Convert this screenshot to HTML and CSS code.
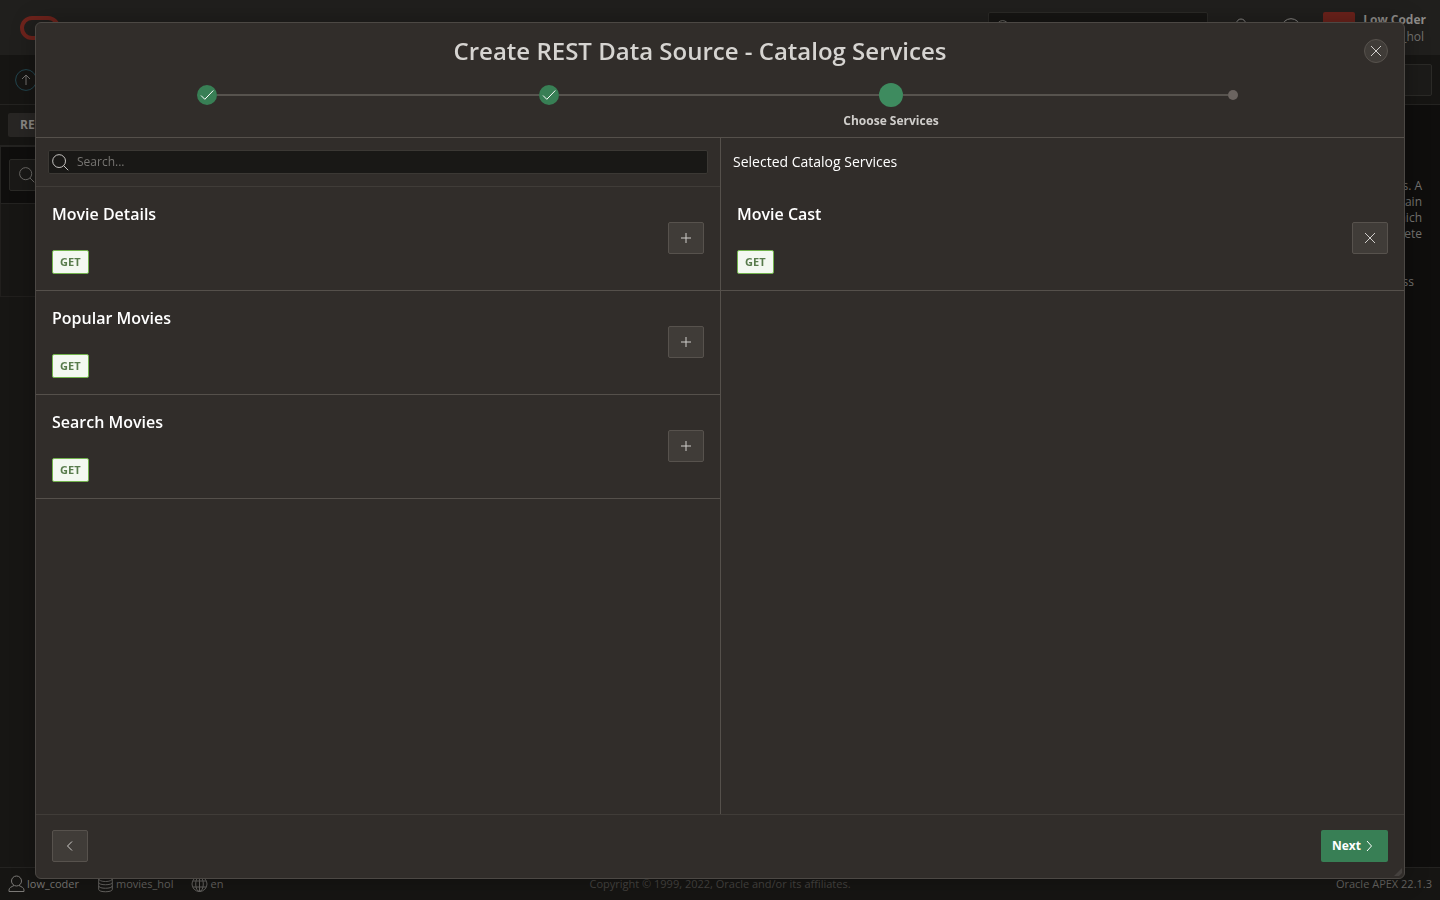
FILE: index.html
```html
<!DOCTYPE html>
<html lang="en">
<head>
<meta charset="utf-8">
<title>Create REST Data Source - Catalog Services</title>
<link rel="stylesheet" href="styles.css">
</head>
<body>
<svg class="sprite" aria-hidden="true">
  <symbol id="search" viewBox="0 0 18 18"><circle cx="7.5" cy="7.5" r="6.8"/><path d="M12.4 12.4l4.8 4.8"/></symbol>
  <symbol id="plus" viewBox="0 0 16 16"><path d="M8 3v10M3 8h10"/></symbol>
  <symbol id="close" viewBox="0 0 16 16"><path d="M3 3l10 10M13 3L3 13"/></symbol>
  <symbol id="check" viewBox="0 0 20 20"><path d="M4 10.5l3.8 3.8L16.3 5.5"/></symbol>
</svg>

<div class="page">
  <header class="topbar">
    <svg class="logo" viewBox="0 0 40 24"><rect x="2" y="2" width="36" height="20" rx="10"/></svg>
    <div class="top-search"><svg class="icon"><use href="#search"/></svg></div>
    <svg class="top-icon" viewBox="0 0 20 20"><circle cx="10" cy="5.5" r="4.5"/><path d="M2 19c0-5 3-8 8-8s8 3 8 8"/></svg>
    <svg class="top-icon" viewBox="0 0 20 20"><circle cx="10" cy="10" r="9.3"/></svg>
    <div class="avatar"></div>
    <div class="account"><strong>Low Coder</strong><span>movies_hol</span></div>
  </header>
  <div class="toolbar">
    <svg class="up" viewBox="0 0 22 22"><circle cx="11" cy="11" r="10.4"/><path d="M11 16V6.5M7 10l4-4 4 4"/></svg>
    <div class="toolbar-button"></div>
  </div>
  <div class="tabs"><span class="tab">REST</span></div>
  <main class="content">
    <section class="report">
      <div class="report-bar"><div class="report-search"><svg class="icon"><use href="#search"/></svg></div></div>
    </section>
    <aside class="about">
      <p>sources. A<br>contain<br>which<br>discrete</p>
      <p class="about-more">access</p>
    </aside>
  </main>
  <footer class="statusbar">
    <ul class="status">
      <li class="user"><svg viewBox="0 0 17 18"><circle cx="8.500" cy="6" r="5"/><path d="M6 10.500C3.500 12 1 12.500 1 15v1.500h15V15c0-2.500-2.500-3-5-4.500"/></svg>low_coder</li>
      <li class="schema"><svg viewBox="0 0 17 18"><ellipse cx="8.500" cy="4" rx="6.800" ry="2.500"/><path d="M1.700 4v10.500c0 3 13.600 3 13.600 0V4M1.700 7.500c0 3 13.600 3 13.600 0M1.700 11c0 3 13.600 3 13.600 0"/></svg>movies_hol</li>
      <li class="language"><svg viewBox="0 0 17 18"><circle cx="8.500" cy="9" r="7.500"/><ellipse cx="8.500" cy="9" rx="3.800" ry="7.500"/><path d="M8.500 1.500v15M2 6h13M2 12h13"/></svg>en</li>
    </ul>
    <span class="copyright">Copyright © 1999, 2022, Oracle and/or its affiliates.</span>
    <span class="version">Oracle APEX 22.1.3</span>
  </footer>
</div>

<div class="dialog" role="dialog" aria-modal="true" aria-labelledby="dialog-title">
  <header class="dialog-header">
    <div class="title-row">
      <h1 id="dialog-title">Create REST Data Source - Catalog Services</h1>
      <button class="close" type="button" aria-label="Close"><svg class="icon"><use href="#close"/></svg></button>
    </div>
    <ol class="steps">
      <li class="step"><div class="track"><span class="dot done"><svg viewBox="0 0 20 20"><use href="#check"/></svg></span></div></li>
      <li class="step"><div class="track"><span class="dot done"><svg viewBox="0 0 20 20"><use href="#check"/></svg></span></div></li>
      <li class="step" aria-current="step"><div class="track"><span class="dot current"></span></div><span class="step-label">Choose Services</span></li>
      <li class="step"><div class="track"><span class="dot"></span></div></li>
    </ol>
  </header>
  <div class="panels">
    <section class="panel">
      <div class="search-region">
        <label class="search"><svg class="icon"><use href="#search"/></svg><input type="search" placeholder="Search..." aria-label="Search services"></label>
      </div>
      <ul class="services">
        <li class="service"><div class="service-text"><h3>Movie Details</h3><span class="badge">GET</span></div><button class="square" type="button" aria-label="Add Movie Details"><svg class="icon"><use href="#plus"/></svg></button></li>
        <li class="service"><div class="service-text"><h3>Popular Movies</h3><span class="badge">GET</span></div><button class="square" type="button" aria-label="Add Popular Movies"><svg class="icon"><use href="#plus"/></svg></button></li>
        <li class="service"><div class="service-text"><h3>Search Movies</h3><span class="badge">GET</span></div><button class="square" type="button" aria-label="Add Search Movies"><svg class="icon"><use href="#plus"/></svg></button></li>
      </ul>
    </section>
    <section class="panel selected">
      <h2>Selected Catalog Services</h2>
      <ul class="services">
        <li class="service"><div class="service-text"><h3>Movie Cast</h3><span class="badge">GET</span></div><button class="square" type="button" aria-label="Remove Movie Cast"><svg class="icon"><use href="#close"/></svg></button></li>
      </ul>
    </section>
  </div>
  <footer class="dialog-footer">
    <button class="square" type="button" aria-label="Previous"><svg class="icon" viewBox="0 0 16 16"><path d="M10 3.500L5.500 8l4.500 4.500"/></svg></button>
    <button class="next" type="button">Next<svg viewBox="0 0 16 16"><path d="M6 3l4.500 5L6 13"/></svg></button>
  </footer>
  <svg class="grip" viewBox="0 0 8 8"><path d="M0 8L8 0V5L5 8z"/></svg>
</div>
</body>
</html>
```
FILE: styles.css
```css
* { box-sizing: border-box; }

body {
  margin: 0;
  background: #0f0e0d;
  color: #757370;
  font: 12px/16px "Open Sans", "Noto Sans", sans-serif;
}

h1, h2, h3, p, ul, ol { margin: 0; padding: 0; }
ul, ol { list-style: none; }
button { padding: 0; font: inherit; color: inherit; cursor: pointer; }
svg { display: block; fill: none; stroke: currentColor; }
.icon { width: 16px; height: 16px; }
.sprite { display: none; }

/* Page under the dialog */
.page { display: flex; flex-direction: column; height: 100vh; overflow: hidden; }

.topbar {
  display: flex;
  flex: none;
  height: 55px;
  padding: 12px 14px 0 20px;
  background: #201f1d;
}
.logo { width: 40px; height: 24px; margin: 4px auto 0 0; color: #6e231c; stroke-width: 4; }
.top-search {
  width: 220px;
  height: 32px;
  margin-right: 23px;
  padding: 7px;
  background: #161513;
  border: 1px solid #2b2a27;
  border-radius: 2px;
}
.top-icon { width: 20px; height: 20px; margin: 6px 30px 0 0; color: #8a8885; }
.top-icon + .top-icon { margin-right: 22px; }
.avatar { width: 32px; height: 32px; margin-right: 6px; background: #6b221b; border-radius: 2px; }
.account { display: flex; flex-direction: column; align-items: flex-end; }
.account strong { color: #8e8c89; font-weight: 700; }
.account span { padding: 1px 2px 0 0; }

.toolbar {
  display: flex;
  flex: none;
  align-items: center;
  justify-content: space-between;
  height: 50px;
  padding: 0 8px 0 15px;
  background: #161513;
  border-bottom: 1px solid #242321;
}
.up { width: 22px; height: 22px; color: #757370; }
.up circle { stroke: #234650; }
.toolbar-button { width: 90px; height: 32px; background: #1c1b19; border: 1px solid #2b2a27; border-radius: 2px; }

.tabs { flex: none; height: 40px; padding: 8px; background: #161513; width: 50%; }
.tab {
  display: inline-block;
  padding: 4px 12px;
  background: #282624;
  border-radius: 2px;
  color: #8a8885;
  font-weight: 700;
}
.content { display: flex; flex: 1; justify-content: space-between; min-height: 0; }
.report { width: 50%; background: #171614; border-top: 1px solid #242321; }
.report-bar { padding: 12px 8px; background: #0f0e0d; border: 1px solid #242321; }
.report-search { width: 50%; height: 32px; padding: 7px 9px; background: #1a1917; border: 1px solid #2b2a27; border-radius: 2px; }
.report::after { content: ""; display: block; height: 92px; border: 1px solid #211f1d; border-top: 0; }
.about { padding: 33px 18px 0 0; text-align: right; }
.about-more { padding: 32px 8px 0 0; }

.statusbar {
  display: flex;
  flex: none;
  align-items: center;
  justify-content: space-between;
  height: 33px;
  padding: 0 8px;
  background: #161513;
  border-top: 1px solid #242321;
  color: #656360;
  font-size: 11px;
}
.status { display: flex; flex: 1; gap: 18px; }
.status li { display: flex; align-items: center; gap: 2px; }
.status svg { width: 17px; height: 18px; }
.user { color: #7b7976; }
.copyright { color: #454340; }
.version { flex: 1; text-align: right; }

/* Dialog */
.dialog {
  position: fixed;
  inset: 22px 35px 21px;
  display: flex;
  flex-direction: column;
  overflow: hidden;
  background: #312d2a;
  border: 1px solid #4c4844;
  border-radius: 6px;
  box-shadow: 0 0 24px rgba(0, 0, 0, 0.3);
  color: #d0cecb;
}
.dialog-header { flex: none; height: 115px; border-bottom: 1px solid #55504b; }
.title-row { display: flex; align-items: center; gap: 16px; height: 56px; padding: 0 16px; }
h1 { flex: 1; color: #d6d4d1; font-size: 24px; line-height: 32px; font-weight: 600; text-align: center; }
.close {
  display: grid;
  place-items: center;
  width: 24px;
  height: 24px;
  background: #403c38;
  border: 1px solid #57524d;
  border-radius: 50%;
}

.steps { display: grid; grid-template-columns: repeat(4, 1fr); padding-top: 4px; }
.step { text-align: center; }
.track { display: flex; align-items: center; height: 24px; }
.track::before, .track::after { content: ""; flex: 1; height: 2px; background: #57534e; }
.step:first-child .track::before, .step:last-child .track::after { background: transparent; }
.dot { width: 10px; height: 10px; background: #6b6460; border-radius: 50%; }
.dot.done { width: 20px; height: 20px; background: #387f55; color: #fff; }
.dot.done svg { width: 20px; height: 20px; }
.dot.current { width: 24px; height: 24px; background: #3e8b5f; }
.step-label { display: block; padding-top: 6px; font-weight: 700; }

.panels { display: grid; flex: 1; grid-template-columns: 1fr 1fr; min-height: 0; }
.selected { border-left: 1px solid #55504b; }
.search-region { height: 49px; padding: 12px; border-bottom: 1px solid #403c38; }
.search {
  display: flex;
  align-items: center;
  height: 24px;
  padding-left: 3px;
  gap: 8px;
  background: #191816;
  border: 1px solid #3b3834;
  border-radius: 2px;
}
.search .icon { width: 17px; height: 17px; }
.search input {
  flex: 1;
  min-width: 0;
  padding: 0;
  background: none;
  border: 0;
  outline: 0;
  color: #fff;
  font: inherit;
}
.search input::placeholder { color: #777572; }
h2 { height: 49px; padding: 12px; color: #fff; font-size: 14px; line-height: 24px; font-weight: 400; }

.service {
  display: flex;
  align-items: center;
  justify-content: space-between;
  padding: 15px 16px 16px;
  border-bottom: 1px solid #55504b;
}
.service-text { display: flex; flex-direction: column; align-items: flex-start; gap: 24px; }
h3 { color: #fff; font-size: 16px; line-height: 24px; font-weight: 600; }
.badge {
  padding: 3px 7px;
  background: #f3f8f1;
  border: 1px solid #72b34d;
  border-radius: 2px;
  color: #587b4c;
  font-size: 11px;
  font-weight: 700;
}
.square {
  display: grid;
  place-items: center;
  width: 36px;
  height: 32px;
  background: #403c38;
  border: 1px solid #57524d;
  border-radius: 2px;
}

.dialog-footer {
  display: flex;
  flex: none;
  align-items: center;
  justify-content: space-between;
  height: 64px;
  padding: 0 16px 1px;
  border-top: 1px solid #403c38;
}
.next {
  display: flex;
  align-items: center;
  height: 32px;
  padding: 0 11px;
  background: #387f55;
  border: 0;
  border-radius: 2px;
  color: #fff;
  font-weight: 700;
}
.next svg { width: 16px; height: 16px; }
.grip { position: absolute; right: 2px; bottom: 2px; width: 8px; height: 8px; fill: #45413e; stroke: none; }
```
